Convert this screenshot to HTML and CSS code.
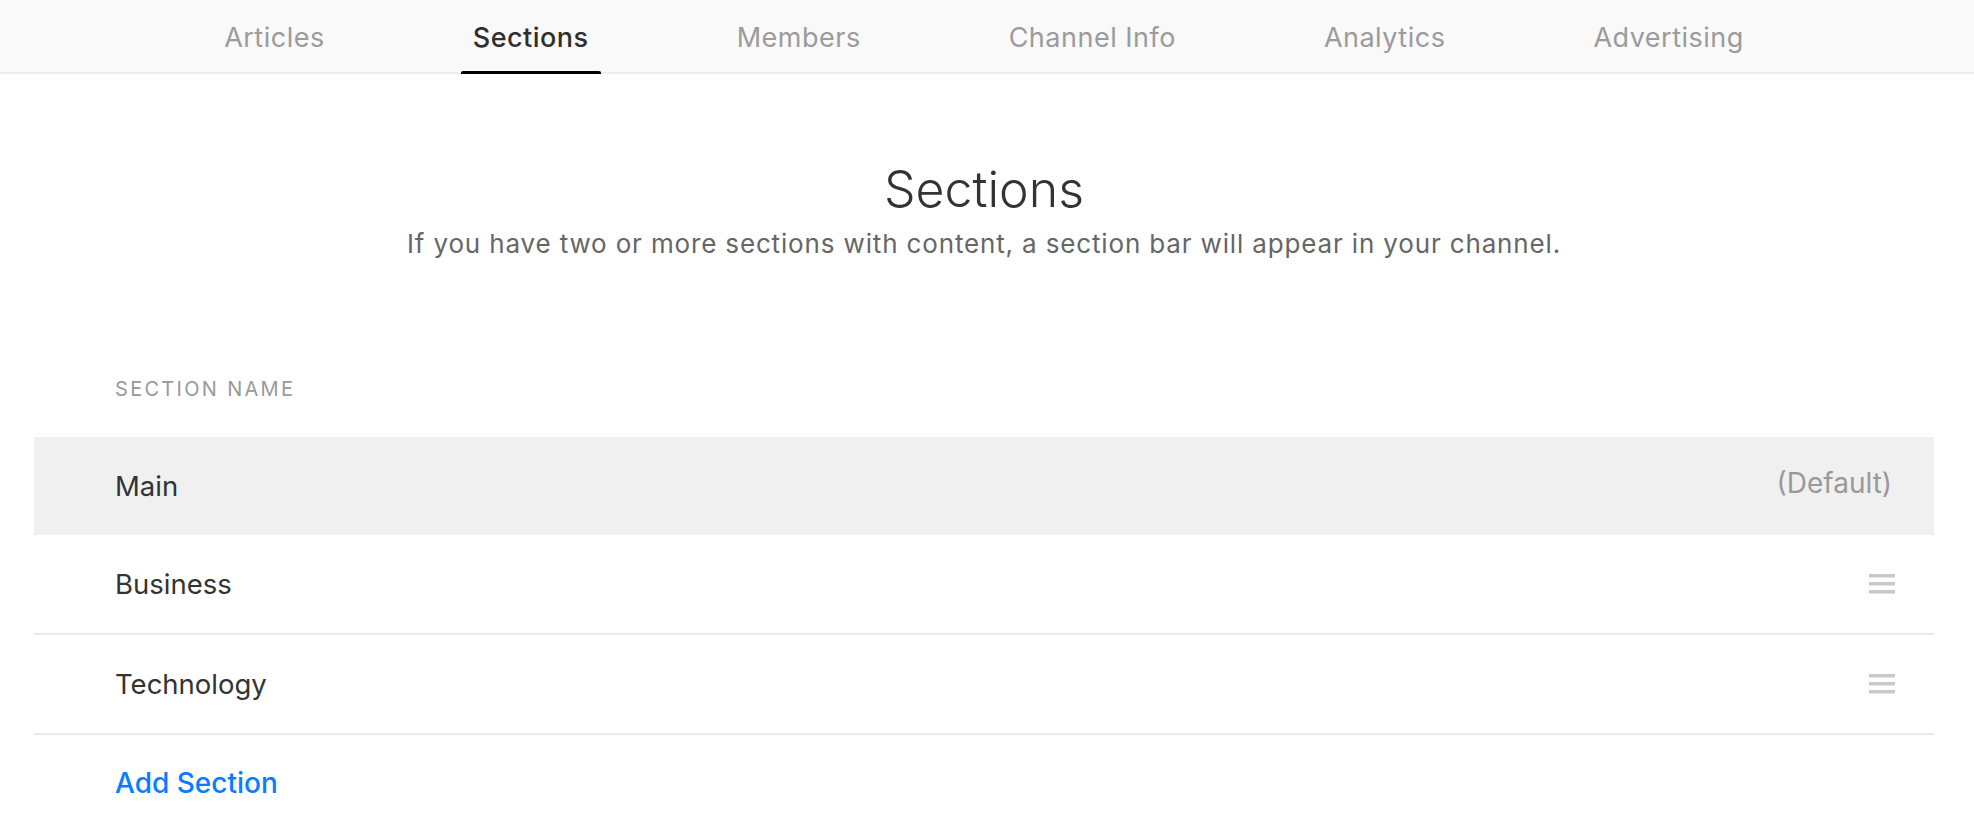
FILE: index.html
```html
<!DOCTYPE html>
<html lang="en">
<head>
<meta charset="utf-8">
<title>Sections</title>
<link rel="stylesheet" href="styles.css">
</head>
<body>
<nav class="topnav">
  <div class="tabs">
    <a class="tab">Articles</a>
    <a class="tab active">Sections</a>
    <a class="tab">Members</a>
    <a class="tab">Channel Info</a>
    <a class="tab">Analytics</a>
    <a class="tab">Advertising</a>
  </div>
</nav>
<main class="page">
  <header class="intro">
    <h1 class="title">Sections</h1>
    <p class="subtitle">If you have two or more sections with content, a section bar will appear in your channel.</p>
  </header>
  <div class="list-label">SECTION NAME</div>
  <ul class="list">
    <li class="row row-default">
      <span class="row-name">Main</span>
      <span class="row-note">(Default)</span>
    </li>
    <li class="row">
      <span class="row-name">Business</span>
      <svg class="handle" width="26" height="20" viewBox="0 0 26 20"><rect x="0" y="0" width="26" height="3.5"/><rect x="0" y="8" width="26" height="3.5"/><rect x="0" y="16" width="26" height="3.5"/></svg>
    </li>
    <li class="row">
      <span class="row-name">Technology</span>
      <svg class="handle" width="26" height="20" viewBox="0 0 26 20"><rect x="0" y="0" width="26" height="3.5"/><rect x="0" y="8" width="26" height="3.5"/><rect x="0" y="16" width="26" height="3.5"/></svg>
    </li>
  </ul>
  <div class="add-row"><a class="add-link">Add Section</a></div>
</main>
</body>
</html>
```
FILE: styles.css
```css
* { box-sizing: border-box; }
html, body { margin: 0; padding: 0; background: #fff; }
body {
  font-family: Inter, "Noto Sans", "Liberation Sans", sans-serif;
  color: #333;
  -webkit-font-smoothing: antialiased;
}
.topnav {
  height: 74px;
  background: #f9f9f9;
  border-bottom: 2px solid #ececec;
}
.tabs {
  display: flex;
  justify-content: center;
  align-items: stretch;
  gap: 124px;
  height: 72px;
  padding-right: 6px;
}
.tab {
  display: flex;
  align-items: center;
  padding: 3px 12px 0;
  font-size: 27px;
  letter-spacing: 0.5px;
  color: #9b9b9b;
  text-decoration: none;
  position: relative;
}
.tab.active {
  color: #2f2f2f;
  font-weight: 500;
}
.tab.active::after {
  content: "";
  position: absolute;
  left: 0;
  right: 0;
  bottom: -2px;
  height: 3px;
  background: #000;
  border-radius: 2px 2px 0 0;
}
.page {
  margin: 0 40px 0 34px;
}
.intro {
  text-align: center;
  padding-top: 85px;
}
.title {
  margin: 0;
  font-size: 50px;
  line-height: 60px;
  font-weight: 300;
  color: #333;
}
.subtitle {
  margin: 8px 0 0;
  font-size: 26px;
  line-height: 34px;
  letter-spacing: 0.85px;
  color: #666;
}
.list-label {
  margin-top: 116px;
  padding-left: 81px;
  font-size: 20px;
  line-height: 24px;
  letter-spacing: 2.3px;
  color: #999;
}
.list {
  list-style: none;
  margin: 36px 0 0;
  padding: 0;
}
.row {
  height: 100px;
  display: flex;
  align-items: center;
  justify-content: space-between;
  padding: 0 39px 0 81px;
  border-bottom: 2px solid #ebebeb;
}
.row-default {
  height: 98px;
  background: #f0f0f0;
  border-bottom: none;
  padding-right: 42px;
}
.row-name {
  font-size: 27.5px;
  color: #333;
}
.row-note {
  font-size: 28px;
  color: #999;
  margin-top: -6px;
}
.handle { fill: #c8c8c8; display: block; }
.add-row {
  height: 96px;
  display: flex;
  align-items: center;
  padding-left: 81px;
}
.add-link {
  font-size: 28px;
  font-weight: 500;
  color: #0a7cff;
  text-decoration: none;
}
```
